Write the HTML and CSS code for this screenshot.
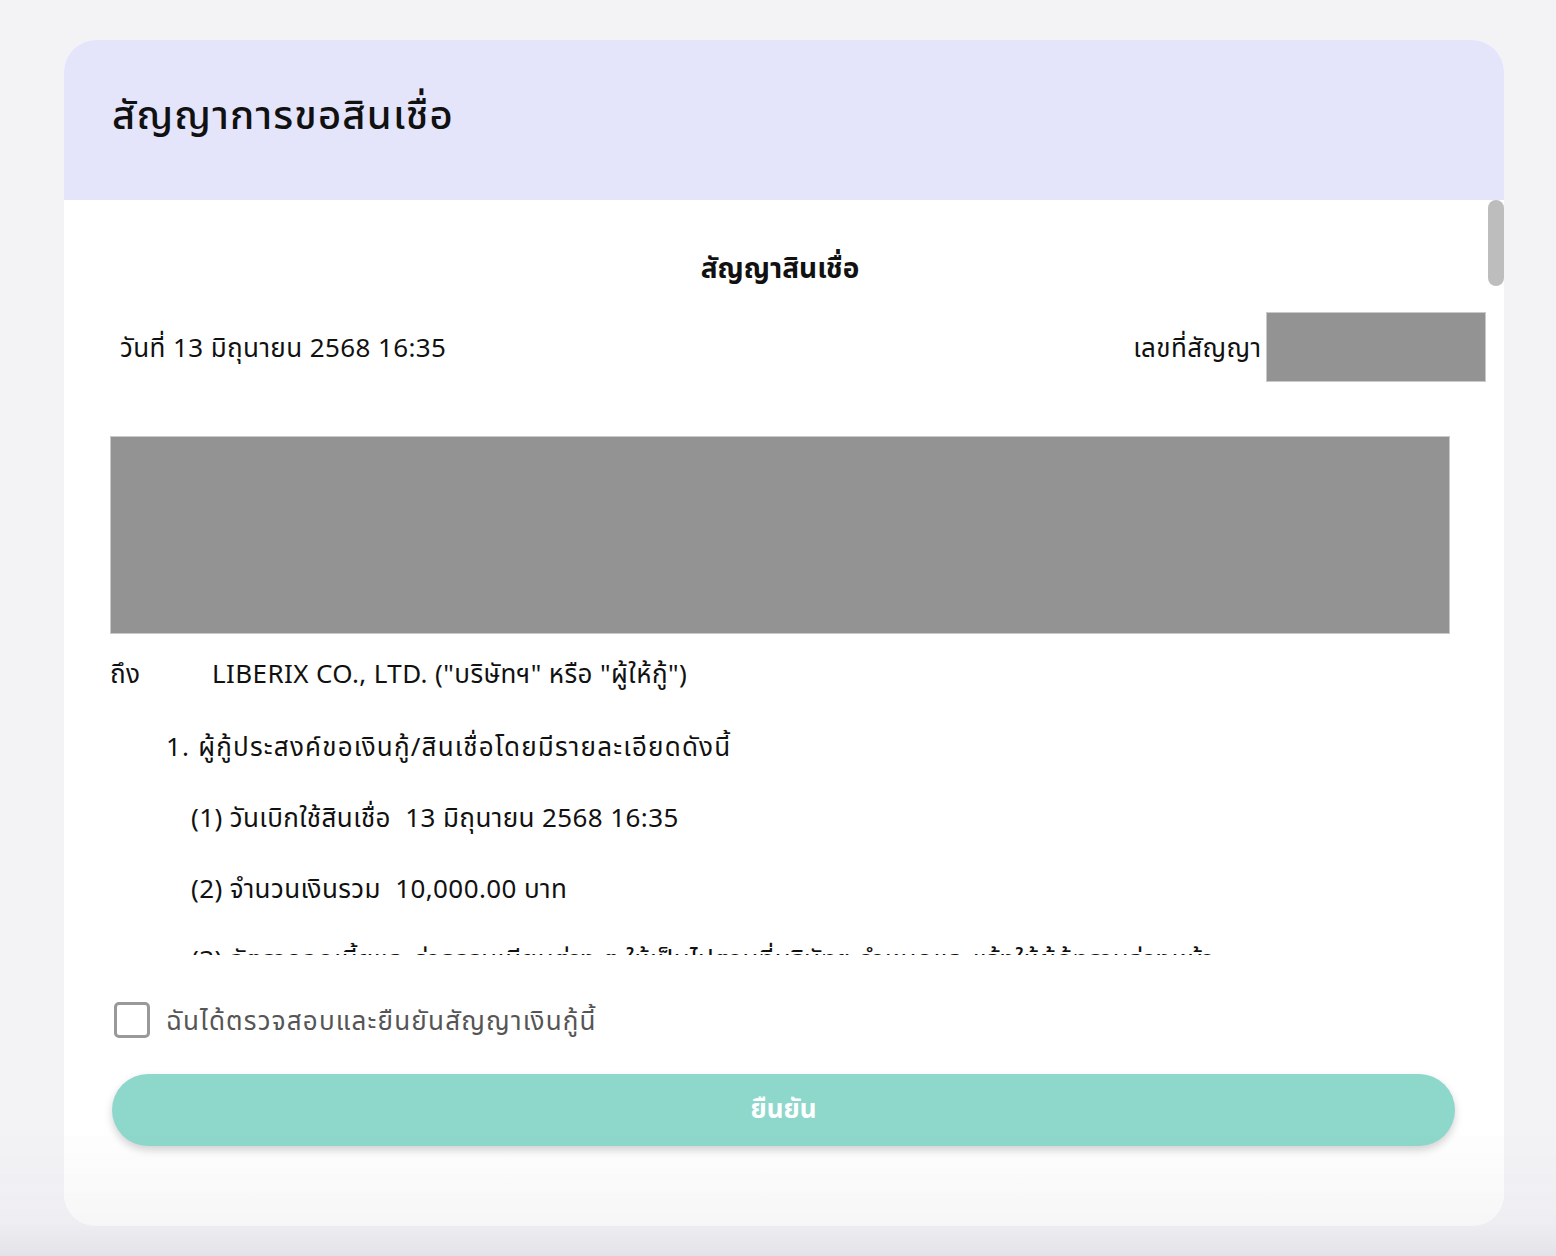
FILE: index.html
```html
<!DOCTYPE html>
<html lang="th">
<head>
  <meta charset="UTF-8" />
  <meta name="viewport" content="width=device-width, initial-scale=1.0"/>
  <title>สัญญาการขอสินเชื่อ</title>
  <link rel="stylesheet" href="styles.css">
</head>
<body>
  <div class="card">
    <div class="card-head">
      <h1>สัญญาการขอสินเชื่อ</h1>
    </div>

    <div class="contract-wrap">
      <div class="contract">
        <h2>สัญญาสินเชื่อ</h2>
        <div class="meta-row">
          <span>วันที่ 13 มิถุนายน 2568 16:35</span>
          <span class="contract-no">เลขที่สัญญา : <span class="redact redact-no"></span></span>
        </div>

        <div class="redact redact-block"></div>

        <p class="to-line"><span class="to-label">ถึง</span>LIBERIX CO., LTD. ("บริษัทฯ" หรือ "ผู้ให้กู้")</p>
        <p class="clause">1. ผู้กู้ประสงค์ขอเงินกู้/สินเชื่อโดยมีรายละเอียดดังนี้</p>
        <p class="sub">(1) วันเบิกใช้สินเชื่อ&nbsp; 13 มิถุนายน 2568 16:35</p>
        <p class="sub">(2) จำนวนเงินรวม&nbsp; 10,000.00 บาท</p>
        <p class="sub">(3) อัตราดอกเบี้ยและค่าธรรมเนียมต่าง ๆ ให้เป็นไปตามที่บริษัทฯ กำหนดและแจ้งให้ผู้กู้ทราบล่วงหน้า</p>
        <p class="sub">(4) ระยะเวลาการผ่อนชำระ 12 งวด</p>
      </div>
      <div class="thumb"></div>
    </div>

    <div class="card-foot">
      <label class="confirm">
        <input type="checkbox" />
        <span>ฉันได้ตรวจสอบและยืนยันสัญญาเงินกู้นี้</span>
      </label>
      <button class="confirm-btn" disabled>ยืนยัน</button>
    </div>
  </div>
</body>
</html>
```

FILE: styles.css
```css
:root {
  --bg: #f3f3f6;
  --head: #e4e4fb;
  --text: #111;
  --text-soft: #555;
  --redact: #939393;
  --accent: #8dd7cb;
  --radius: 32px;
}
html, body {
  margin: 0;
  padding: 0;
  background: var(--bg);
  font-family: "Noto Sans", "Noto Sans Thai", "Open Sans", sans-serif;
  color: var(--text);
}
body {
  padding: 40px 0 30px 64px;
  min-height: 100vh;
  box-sizing: border-box;
}
body::after {
  content: "";
  position: fixed;
  left: 0;
  right: 0;
  bottom: 0;
  height: 130px;
  background: linear-gradient(180deg, rgba(20,20,60,0) 0%, rgba(20,20,60,0.02) 74%, rgba(20,20,60,0.07) 100%);
  pointer-events: none;
}
.card {
  width: 1440px;
  height: 1186px;
  background: #fff;
  border-radius: var(--radius);
  overflow: hidden;
  display: flex;
  flex-direction: column;
}
.card-head {
  background: var(--head);
  height: 160px;
  flex: none;
  padding: 0 48px;
  display: flex;
  align-items: center;
  box-sizing: border-box;
}
.card-head h1 {
  margin: 0 0 12px 0;
  font-size: 40px;
  line-height: 56px;
  font-weight: 500;
  letter-spacing: 0.03em;
}
.contract-wrap {
  position: relative;
  height: 755px;
  flex: none;
  overflow: hidden;
}
.thumb {
  position: absolute;
  right: 0;
  top: 0;
  width: 16px;
  height: 86px;
  border-radius: 8px;
  background: #bdbdbd;
}
.contract {
  padding: 47px 54px 0 46px;
  font-size: 26px;
  line-height: 36px;
  letter-spacing: 0.4px;
}
.contract h2 {
  margin: 0;
  text-align: center;
  font-size: 28px;
  line-height: 40px;
  font-weight: 700;
  letter-spacing: 0;
}
.meta-row {
  display: flex;
  justify-content: space-between;
  align-items: center;
  height: 70px;
  margin: 25px -36px 0 10px;
}
.contract-no {
  display: flex;
  align-items: center;
}
.redact {
  background: var(--redact);
  border: 1px solid #c9c9c9;
  box-sizing: border-box;
}
.redact-no {
  width: 220px;
  height: 70px;
  margin-left: -10px;
}
.redact-block {
  height: 198px;
  margin-top: 54px;
}
.contract p {
  margin: 21px 0 0 0;
}
.to-label {
  display: inline-block;
  width: 102px;
}
.contract .clause {
  margin-top: 37px;
  padding-left: 56px;
  letter-spacing: 1.2px;
}
.contract .sub {
  margin-top: 35px;
  padding-left: 81px;
}
.card-foot {
  padding: 43px 49px 0 48px;
  display: flex;
  flex-direction: column;
  gap: 32px;
  background: linear-gradient(180deg, #fff 60%, #fbfbfb 100%);
  flex: 1;
}
.confirm {
  display: flex;
  align-items: center;
  gap: 16px;
  color: var(--text-soft);
  font-size: 26px;
  line-height: 44px;
  letter-spacing: 1.2px;
  padding-left: 2px;
}
.confirm input {
  appearance: none;
  -webkit-appearance: none;
  margin: 0;
  width: 36px;
  height: 36px;
  flex: none;
  border: 3px solid #999;
  border-radius: 5px;
  background: #fff;
  box-sizing: border-box;
}
.confirm-btn {
  height: 72px;
  border: none;
  border-radius: 36px;
  background: var(--accent);
  color: #fff;
  font-family: inherit;
  font-size: 26px;
  font-weight: 700;
  box-shadow: 0 4px 8px rgba(0,0,0,0.18);
}
```
